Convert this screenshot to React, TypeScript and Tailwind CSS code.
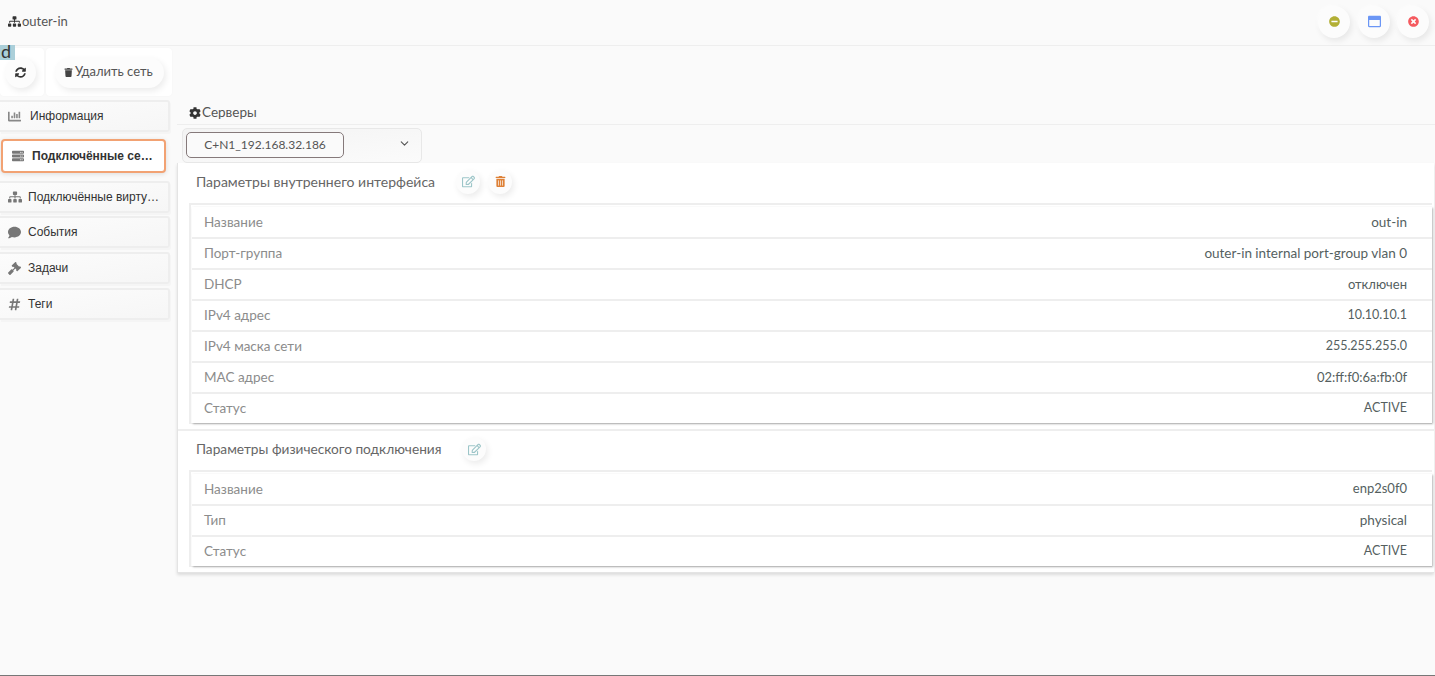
import React from "react";
import { FaSitemap, FaSyncAlt, FaTrash, FaChartBar, FaServer, FaComment, FaGavel, FaHashtag, FaCog, FaRegEdit, FaTrashAlt, FaMinusCircle, FaTimesCircle, FaRegWindowMaximize } from "react-icons/fa";
import { FiChevronDown } from "react-icons/fi";

const gothic = "font-['Lato','Noto_Sans',sans-serif]";

function RoundBtn({ children, className = "" }: { children: React.ReactNode; className?: string }) {
  return (
    <div className={`flex items-center justify-center rounded-full bg-[#fcfcfc] shadow-[2px_3px_6px_rgba(0,0,0,0.08),-1px_-1px_3px_rgba(255,255,255,0.9)] ${className}`}>
      {children}
    </div>
  );
}

function NavItem({ icon, label, h = "h-[32px]", gap = "gap-[6px]", mb = "mb-[4px]" }: { icon: React.ReactNode; label: string; h?: string; gap?: string; mb?: string }) {
  return (
    <div className={`w-[170px] ${mb} ${h} ${gap} pl-[7px] pr-[6px] flex items-center rounded-r-[3px] border-2 border-l-0 border-[#eeeeee] bg-gradient-to-br from-[#fcfcfc] to-[#f6f6f6] shadow-[1px_2px_0_#f5f5f5] font-['Liberation_Sans',sans-serif] text-[12px] text-[#333]`}>
      <span className="w-[15px] flex justify-center shrink-0 text-[#777]">{icon}</span>
      <span className="whitespace-nowrap">{label}</span>
    </div>
  );
}

function Rows({ rows }: { rows: [string, string, string?][] }) {
  return (
    <div className="ml-[11px] mr-[2px] border-2 border-b-[1px] border-r-0 border-[#eeeeee] pt-[2px] pl-[1px] bg-white">
      <div className="shadow-[1px_1px_2px_rgba(0,0,0,0.3)]">
        {rows.map(([k, v, size], i) => (
          <div key={k} className={`flex items-center justify-between pl-[12px] pr-[25px] text-[13.5px] ${i > 0 ? "h-[31px] border-t-2 border-[#eeeeee]" : "h-[30px]"}`}>
            <span className="text-[#8c8c8c]">{k}</span>
            <span className={`text-[#555f5f] ${size ?? ""}`}>{v}</span>
          </div>
        ))}
      </div>
    </div>
  );
}

export default function App() {
  return (
    <div className={`${gothic} relative h-[676px] w-[1435px] overflow-hidden bg-[#fafafa] flex flex-col border-b border-[#777]`}>
      <header className="h-[46px] shrink-0 flex items-center justify-between border-b border-[#eeeeee] pl-[8px] pr-[6px] pb-[2px]">
        <div className="flex items-center gap-[1px] text-[13px] text-[#555]">
          <FaSitemap className="text-[13px] text-[#333]" />
          <span>outer-in</span>
        </div>
        <div className="flex items-center">
          <RoundBtn className="w-[32px] h-[32px]"><FaMinusCircle className="text-[#b2af35] text-[11px]" /></RoundBtn>
          <RoundBtn className="w-[32px] h-[32px] ml-[8px]"><FaRegWindowMaximize className="text-[#6b96f5] text-[13px]" /></RoundBtn>
          <RoundBtn className="w-[32px] h-[32px] ml-[7px]"><FaTimesCircle className="text-[#f55a5f] text-[11px]" /></RoundBtn>
        </div>
      </header>

      <div className="flex flex-1 min-h-0">
        <aside className="w-[177px] shrink-0 pt-[2px]">
          <div className="flex gap-[2px] h-[48px]">
            <div className="w-[44px] rounded-[4px] bg-white shadow-[0_0_2px_rgba(0,0,0,0.04)] flex items-center justify-center">
              <RoundBtn className="w-[31px] h-[31px] mr-[3px]"><FaSyncAlt className="text-[11px] text-[#333]" /></RoundBtn>
            </div>
            <div className="w-[126px] rounded-[4px] bg-white shadow-[0_0_2px_rgba(0,0,0,0.04)] flex items-center pl-[9px]">
              <RoundBtn className="w-[109px] h-[31px] !justify-start pl-[9px] gap-[2px] text-[13px] text-[#555]">
                <FaTrash className="text-[9px] text-[#444]" />
                <span>Удалить сеть</span>
              </RoundBtn>
            </div>
          </div>
          <nav className="mt-[4px] flex flex-col">
            <NavItem h="h-[32px]" gap="gap-[8px]" mb="mb-[7px]" icon={<FaChartBar className="text-[13px] text-[#888]" />} label="Информация" />
            <div className="ml-[1px] mb-[8px] w-[165px] h-[34px] flex items-center gap-[8px] pl-[9px] pr-[10px] rounded-[4px] border-2 border-[#f2a273] bg-white shadow-[0_1px_5px_rgba(0,0,0,0.12)] font-['Liberation_Sans',sans-serif] text-[12px] font-bold text-[#333]">
              <FaServer className="text-[12px] text-[#777] w-[12px] shrink-0" />
              <span className="whitespace-nowrap">Подключённые се…</span>
            </div>
            <NavItem mb="mb-[3px]" icon={<FaSitemap className="text-[14px]" />} label="Подключённые вирту…" />
            <NavItem icon={<FaComment className="text-[13px]" />} label="События" />
            <NavItem icon={<FaGavel className="text-[13px]" />} label="Задачи" />
            <NavItem icon={<FaHashtag className="text-[13px]" />} label="Теги" />
          </nav>
        </aside>

        <main className="flex-1 min-w-0 pt-[55px]">
          <div className="h-[24px] border-b border-[#eeeeee] pl-[12px] flex items-center gap-[1px] text-[13.5px] text-[#555]">
            <FaCog className="text-[12px] text-[#333]" />
            <span>Серверы</span>
          </div>
          <div className="mt-[3px] ml-[5px] w-[240px] h-[35px] rounded-[5px] border border-[#e8e8e8] bg-gradient-to-br from-[#f3f3f3] to-[#fbfbfb] flex items-start pl-[3px] pt-[3px]">
            <div className="w-[158px] h-[26px] rounded-[5px] border border-[#85797a] bg-[#fafafa] flex items-center justify-center text-[12px] text-[#555]">
              C+N1_192.168.32.186
            </div>
            <FiChevronDown className="ml-[54px] mt-[5px] text-[#555] text-[13px]" />
          </div>
          <section className="mr-[1px] bg-white border-l border-b border-[#e4e4e4] shadow-[0_2px_3px_rgba(0,0,0,0.12)]">
            <div className="h-[40px] flex items-center pl-[18px] pb-[3px] text-[14px] text-[#666]">
              <span className="w-[260px]">Параметры внутреннего интерфейса</span>
              <RoundBtn className="w-[24px] h-[24px]"><FaRegEdit className="text-[13px] text-[#9cc5c8]" /></RoundBtn>
              <RoundBtn className="w-[24px] h-[24px] ml-[8px]"><FaTrashAlt className="text-[11px] text-[#de8137]" /></RoundBtn>
            </div>
            <Rows rows={[
              ["Название", "out-in"],
              ["Порт-группа", "outer-in internal port-group vlan 0"],
              ["DHCP", "отключен", "text-[13px]"],
              ["IPv4 адрес", "10.10.10.1", "text-[12.5px]"],
              ["IPv4 маска сети", "255.255.255.0", "text-[12.5px]"],
              ["MAC адрес", "02:ff:f0:6a:fb:0f", "text-[13px]"],
              ["Статус", "ACTIVE", "text-[12.5px]"],
            ]} />
            <div className="mt-[5px] border-t-2 border-[#eeeeee] h-[41px] flex items-center pl-[18px] pb-[3px] text-[13.7px] text-[#666]">
              <span className="w-[266px]">Параметры физического подключения</span>
              <RoundBtn className="w-[24px] h-[24px]"><FaRegEdit className="text-[13px] text-[#9cc5c8]" /></RoundBtn>
            </div>
            <Rows rows={[
              ["Название", "enp2s0f0", "text-[13px]"],
              ["Тип", "physical"],
              ["Статус", "ACTIVE", "text-[12.5px]"],
            ]} />
            <div className="h-[5px]" />
          </section>
        </main>
      </div>

      <div className="absolute left-0 top-[45px] h-[15px] w-[15px] bg-[#abcfd9] text-[18px] leading-[13px] text-[#333] pl-[1px]">d</div>
    </div>
  );
}
